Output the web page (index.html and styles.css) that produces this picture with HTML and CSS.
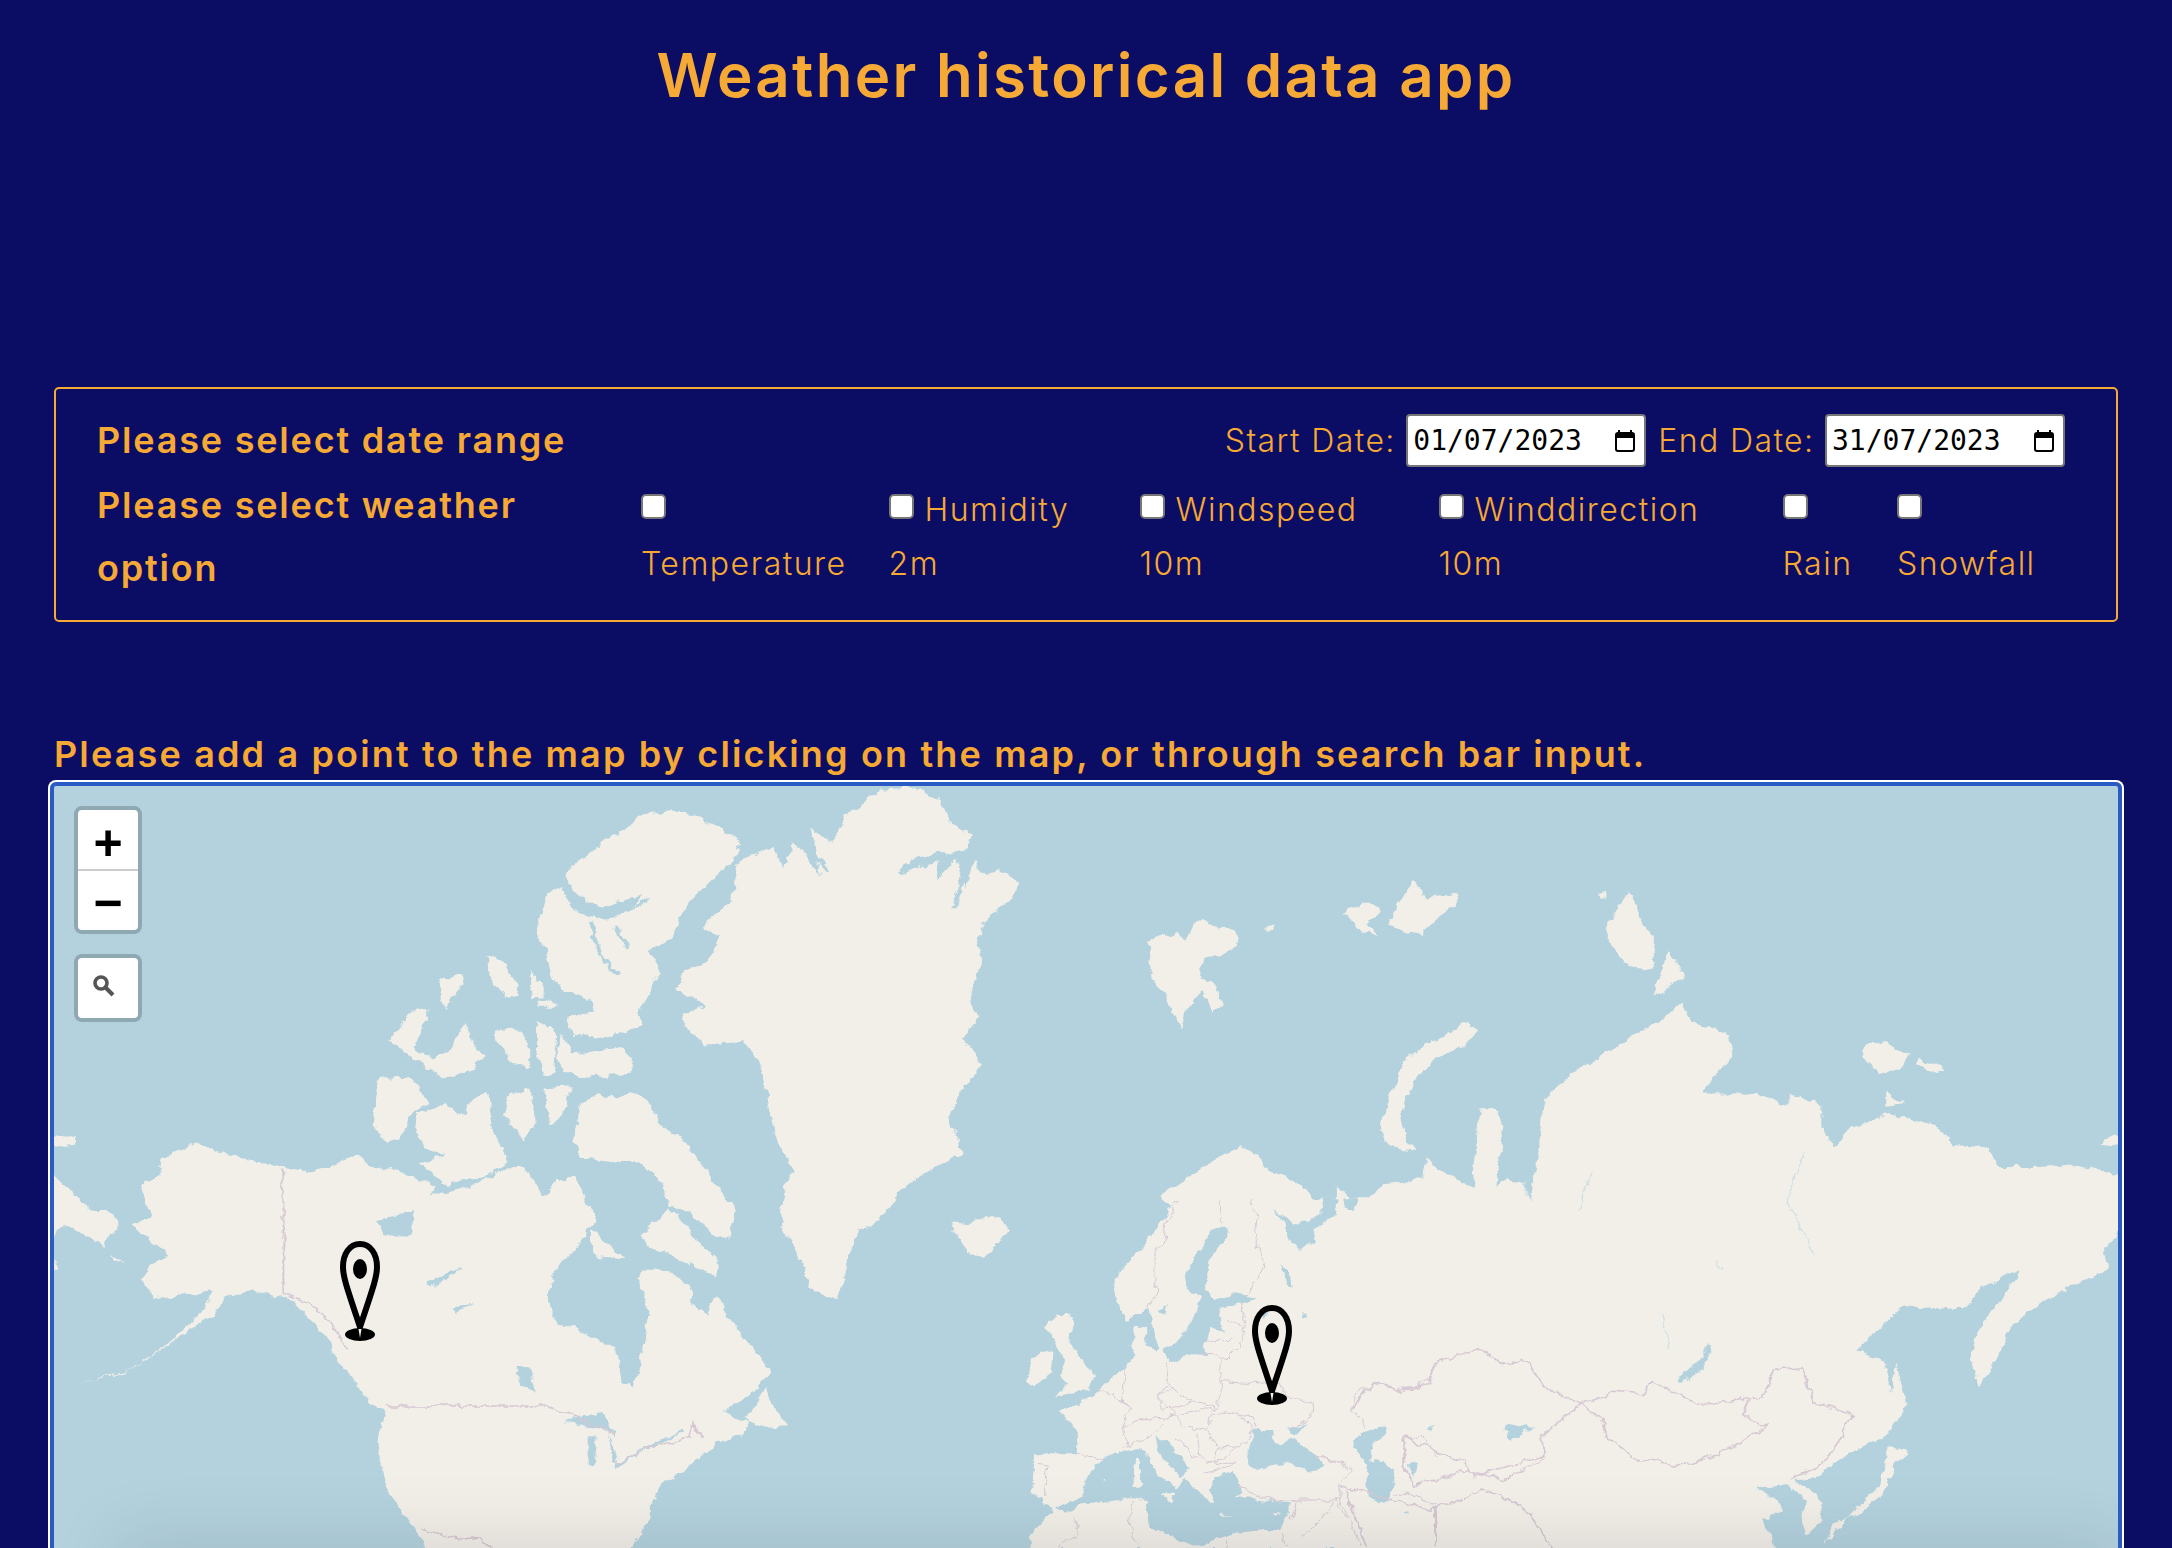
FILE: index.html
```html
<!DOCTYPE html>
<html lang="en">
<head>
<meta charset="utf-8">
<title>Weather historical data app</title>
<link rel="stylesheet" href="styles.css">
</head>
<body>
<main class="page">
  <h1 class="title">Weather historical data app</h1>

  <section class="panel">
    <div class="date-row">
      <h3 class="panel-label">Please select date range</h3>
      <div class="dates">
        <span class="field-label">Start Date:</span>
        <div class="date-input"><span>01/07/2023</span><svg class="cal" viewBox="0 0 20 22"><path d="M4 0v3M16 0v3" stroke="#000" stroke-width="2"/><rect x="1" y="3" width="18" height="18" rx="2" fill="none" stroke="#000" stroke-width="2"/><rect x="1" y="3" width="18" height="5" fill="#000"/></svg></div>
        <span class="field-label">End Date:</span>
        <div class="date-input"><span>31/07/2023</span><svg class="cal" viewBox="0 0 20 22"><path d="M4 0v3M16 0v3" stroke="#000" stroke-width="2"/><rect x="1" y="3" width="18" height="18" rx="2" fill="none" stroke="#000" stroke-width="2"/><rect x="1" y="3" width="18" height="5" fill="#000"/></svg></div>
      </div>
    </div>
    <div class="option-row">
      <h3 class="panel-label option-title">Please select weather option</h3>
      <div class="options">
        <label class="opt"><input type="checkbox"><br>Temperature</label>
        <label class="opt"><input type="checkbox">Humidity<br>2m</label>
        <label class="opt"><input type="checkbox">Windspeed<br>10m</label>
        <label class="opt"><input type="checkbox">Winddirection<br>10m</label>
        <label class="opt"><input type="checkbox"><br>Rain</label>
        <label class="opt"><input type="checkbox"><br>Snowfall</label>
      </div>
    </div>
  </section>

  <h3 class="map-heading">Please add a point to the map by clicking on the map, or through search bar input.</h3>

  <section class="map">
    <svg class="world" viewBox="54 786 2064 762" preserveAspectRatio="none">
      <defs>
        <filter id="rough" filterUnits="userSpaceOnUse" x="40" y="770" width="2100" height="800">
          <feTurbulence type="fractalNoise" baseFrequency="0.09" numOctaves="4" seed="4" result="n"/>
          <feDisplacementMap in="SourceGraphic" in2="n" scale="9" xChannelSelector="R" yChannelSelector="G"/>
          <feGaussianBlur stdDeviation="0.7"/>
        </filter>
      </defs>
      <g filter="url(#rough)">
        <!-- Americas, Greenland, Arctic Canada -->
        <g class="land" transform="translate(40 780) scale(.6761 .4898)">
          <path d="M1205 60L1240 20 1300 15 1335 50 1345 85 1380 115 1365 145 1290 160 1275 190 1330 165 1325 205 1355 160 1370 220 1380 165 1395 195 1415 180 1450 210 1440 240 1395 290 1385 340 1395 370 1375 430 1385 490 1365 530 1395 580 1360 640 1345 690 1365 760 1310 800 1270 845 1240 900 1205 930 1190 1010 1180 1060 1140 1040 1120 970 1095 900 1100 830 1115 800 1085 720 1075 640 1060 570 1040 535 985 540 960 510 950 480 985 460 940 430 950 395 990 370 1005 320 980 300 1020 245 1030 220 1030 170 1085 135 1100 185 1115 125 1155 195 1140 100 1175 130 1190 70Z"/>
          <path d="M895 70L930 62 975 75 1010 100 1035 130 1025 165 1000 195 960 250 935 320 900 350 915 385 905 425 885 480 890 500 840 525 790 520 780 490 820 470 810 445 770 430 755 390 745 340 735 310 750 235 770 215 790 265 830 285 850 280 880 255 890 235 830 260 790 230 775 190 830 130 860 105Z"/>
          <path d="M770 515L790 560 860 545 880 575 870 600 810 608 775 600 765 560Z"/>
          <path d="M660 360L690 375 710 440 690 445 665 400ZM725 390L745 420 745 445 725 445ZM595 405L625 395 628 420 610 440 600 470 590 440ZM740 450L765 455 760 465 738 465ZM735 490L765 520 760 600 745 600 735 560Z"/>
          <path d="M515 530L550 470 575 465 565 510 555 550 585 570 610 540 630 500 645 550 660 560 640 590 600 610 585 600 555 570 530 545ZM670 510L710 510 725 540 725 585 700 580 690 550 670 530Z"/>
          <path d="M500 610L545 605 575 655 545 690 535 730 515 740 490 705Z"/>
          <path d="M560 680L600 660 625 690 640 650 665 640 670 720 695 780 660 810 600 825 560 780 600 765 570 750 555 720Z"/>
          <path d="M695 640L725 630 735 700 715 735 685 680ZM745 630L785 625 770 690 755 705Z"/>
          <path d="M790 730L800 660 830 640 850 650 865 640 900 650 915 700 950 730 980 790 1030 880 1020 930 1000 935 960 880 930 870 920 820 885 780 860 780 800 770Z"/>
          <path d="M890 930L930 875 960 920 1005 985 1000 1015 960 990 900 950Z"/>
          <path d="M815 915L850 960 870 980 830 975 815 960Z"/>
          <path d="M148 825L175 810 180 775 230 738 260 760 300 770 360 790 405 800 440 785 470 765 495 795 520 790 585 830 575 850 640 830 650 820 700 790 715 790 745 850 760 820 790 810 810 860 820 900 790 960 760 1000 750 1060 765 1110 800 1125 850 1160 860 1225 875 1240 885 1215 895 1140 900 1080 885 1020 890 1000 925 1000 960 1030 975 1080 985 1095 1000 1050 1030 1120 1060 1170 1080 1210 1060 1245 1010 1290 1050 1310 1045 1330 1000 1355 960 1400 920 1440 905 1480 905 1510 870 1575 575 1575 540 1500 510 1440 500 1350 510 1290 480 1260 465 1225 440 1190 430 1150 400 1100 370 1060 310 1040 280 1050 255 1090 215 1130 160 1180 125 1210 60 1230 130 1205 190 1150 240 1085 260 1040 170 1060 150 1020 165 990 190 970 135 910 165 890Z"/>
          <path d="M1045 1300L1075 1240 1085 1280 1105 1320 1060 1320Z"/>
          <path d="M1345 900L1375 905 1385 895 1420 895 1432 925 1395 975 1370 965 1355 930Z"/>
          <path d="M15 800L50 840 75 880 100 880 115 905 95 950 65 930 35 905 15 940ZM15 730L50 730 50 745 15 750ZM15 970L30 1000 15 1000ZM105 970L125 985 110 982Z"/>
        </g>
        <g class="water" transform="translate(40 780) scale(.6761 .4898)">
          <path d="M495 900L555 880 550 930 510 930ZM570 1030L625 990 600 1020 575 1040ZM610 1075L640 1070 615 1090ZM700 1195L725 1200 735 1255 715 1240ZM775 1310L830 1290 850 1335 800 1315ZM810 1340L825 1340 820 1400 810 1395ZM840 1335L855 1380 850 1400ZM960 980L1000 1030 985 1090 965 1070Z"/>
        </g>
        <g class="waterline" transform="translate(40 780) scale(.6761 .4898)">
          <path d="M800 250Q820 290 860 270T895 240M815 290L830 360 855 400M850 300L870 340M1130 110L1165 190M1270 190Q1310 140 1350 155M1350 260L1375 170M850 1405L890 1370 950 1330"/>
        </g>
        <g class="border" transform="translate(40 780) scale(.6761 .4898)">
          <path d="M360 795V1050L400 1070 425 1100 455 1165M512 1278H750L780 1295 850 1335M850 1400L905 1360 960 1345 965 1310 980 1345M565 1530L625 1550 650 1545 665 1568"/>
        </g>

        <!-- Eurasia outline -->
        <g class="land" transform="translate(1100 780) scale(.6837 .4898)">
          <path d="M70 330L115 310 125 330 140 285 200 305 205 330 175 362 150 360 145 400 165 410 180 460 165 475 150 430 130 460 120 510 95 440 75 400Z"/>
          <path d="M240 300L255 295 255 305 243 310ZM355 270L395 250 410 265 390 295 405 320 375 300ZM430 265L460 200 475 240 520 230 525 255 500 275 490 290 470 315 420 300ZM740 300L775 225 795 300 810 320 810 385 790 390 765 370 745 330ZM830 350L855 395 850 410 810 440ZM730 232L742 228 742 240 732 240Z"/>
          <path d="M540 490L552 510 540 535 490 570 460 620 440 680 445 720 460 760 425 750 408 715 430 620 450 565 490 530 520 510Z"/>
          <path d="M1465 745L1480 725 1495 730 1495 750ZM1120 540L1150 535 1185 560 1175 585 1140 600 1115 570ZM1195 565L1235 590 1225 598 1195 580ZM1150 640L1175 660 1150 665Z"/>
          <path d="M90 845L150 790 205 745 235 770 240 790 300 830 322 875 300 900 265 895 345 880 345 825 365 850 365 880 420 825 470 815 478 770 490 790 545 830 555 670 580 670 590 705 580 830 600 815 625 830 630 860 650 650 700 590 760 540 820 490 850 455 865 495 920 520 925 560 880 640 960 640 1005 665 1010 640 1055 665 1055 710 1075 750 1090 720 1150 680 1225 705 1245 745 1300 750 1315 790 1375 790 1420 785 1500 810 1500 900 1470 960 1475 1000 1400 1045 1360 1085 1330 1120 1310 1190 1285 1240 1275 1170 1285 1120 1320 1060 1345 1000 1290 1035 1265 1080 1245 1080 1175 1075 1130 1130 1105 1165 1150 1190 1155 1250 1175 1280 1150 1340 1100 1370 1070 1400 1045 1425 1015 1430 1050 1460 1058 1510 1035 1540 1025 1500 1035 1470 1005 1440 960 1445 990 1470 1000 1490 970 1510 990 1575 350 1575 350 1000 90 860Z"/>
          <path d="M1165 1190L1180 1280 1160 1320 1155 1260ZM1150 1360L1185 1370 1160 1400 1150 1450 1120 1490 1070 1520 1060 1560 1105 1490 1140 1440 1150 1400Z"/>
        </g>

        <!-- Europe, detail scale -->
        <g class="land" transform="translate(1020 1200) scale(.3333)">
          <path d="M470 -5L440 40 410 85 370 140 330 180 295 215 282 250 295 320 320 362 385 325 395 375 420 440 405 455 380 440 378 380 345 385 335 440 350 460 320 500 280 530 240 570 195 600 115 630 175 700 170 760 45 760 35 880 95 920 100 935 40 990 30 1050 1265 1050 1265 -5Z"/>
          <path d="M75 380L110 345 140 345 165 375 145 420 185 480 225 525 210 565 105 590 150 550 120 530 130 475 105 430 95 400ZM30 480L65 450 100 460 95 520 50 555 22 545Z"/>
        </g>
        <g class="water" transform="translate(1020 1200) scale(.3333)">
          <path d="M600 78L630 90 610 125 570 175 560 225 555 265 580 300 650 280 710 295 670 310 600 320 590 350 615 395 570 385 555 440 560 465 500 462 450 490 430 450 470 425 510 380 530 330 545 290 500 265 495 225 525 170 565 115 570 90Z"/>
          <path d="M760 30L830 70 900 50 910 -5 950 -5 945 40 880 90 880 125 845 150 800 110 790 70ZM785 195L810 220 815 260 795 250ZM970 -5L1015 -5 1000 30 975 25ZM850 335L860 355 845 355ZM420 330L440 320 430 345ZM720 340L745 335 735 355Z"/>
          <path d="M700 690L760 690 775 720 820 715 860 745 895 770 910 800 870 815 800 790 730 805 680 800 675 770Z"/>
          <path d="M800 690L860 670 830 705Z"/>
          <path d="M1010 710L1060 680 1105 680 1090 710 1060 730 1050 780 1090 790 1125 815 1110 880 1110 905 1075 910 1040 880 1045 810 1030 770 1000 740Z"/>
          <path d="M105 925L190 890 200 830 255 770 330 745 365 745 410 820 470 870 490 830 510 850 540 880 560 905 590 905 570 870 585 830 640 815 665 880 650 890 720 900 810 910 800 950 780 985 640 1000 530 1040 460 1010 390 985 380 900 340 895 190 915 130 940Z"/>
          <path d="M410 710L440 720 510 810 480 830 420 760Z"/>
          <path d="M1150 940L1165 935 1165 945ZM1220 690L1240 680 1235 695Z"/>
        </g>
        <g class="land" transform="translate(1020 1200) scale(.3333)">
          <path d="M760 710L800 700 805 720 775 735ZM345 775L360 775 360 860 340 860ZM420 880L470 880 455 905ZM605 938L640 945 605 945ZM755 940L785 940 760 950ZM245 840L255 845 245 850Z"/>
        </g>
        <g class="border" transform="translate(1020 1200) scale(.3333)">
          <path d="M475 0L440 60 430 130 405 150 405 240 410 280 385 325M600 0L603 70M695 0L710 60 705 120 720 160 735 200 700 255 675 290M670 310L665 350 680 380 655 440 615 480 600 480M600 480V540L610 580 575 635M605 545L680 550 725 550 780 545 800 590 880 605 875 650 810 690M560 420L640 415M620 360L670 380M540 462L590 460 600 480M440 490L445 555 410 590 430 625 515 605 580 620M320 500L305 600 335 625 305 680 370 660 430 655 470 645 410 590M410 590L450 565 515 605M480 640L580 625M430 655L480 650 480 680 560 690 580 640M560 690L590 745 660 740 700 690 660 640 580 640M660 640L695 645 710 690M240 570L300 600 335 625M170 760L250 780M50 790L85 795 70 890M305 680L320 740 375 710 430 680M470 710L520 770 550 780 590 790 650 790M530 700L540 770M590 745V790L650 740M545 820L590 810 650 790M650 850L720 890 780 905 830 900 960 900M880 760L950 790 1000 810 960 850 960 900 990 960 1020 1040M880 760L990 800M1120 880L1170 880 1250 920M1155 800L1155 720 1200 710 1255 770M1260 480L1225 540 1150 575 1065 550 1010 580 995 630 1035 680M950 900L980 960M810 960L830 900M165 945L175 1000 110 1044M340 900L325 970 360 1044M620 1044V1010M790 1000L800 1044M840 1010L900 960 950 900"/>
        </g>
        <g class="border" transform="translate(1100 780) scale(.6837 .4898)">
          <path d="M367 1285L400 1230 440 1245 480 1235 490 1190 555 1160 590 1195 620 1180 650 1240 705 1275 750 1250 795 1255 810 1230 880 1275 940 1265 970 1260 985 1205 1025 1200 1045 1270 1100 1295 1080 1350 1060 1390 1010 1430M705 1275L735 1310 740 1340 780 1385 850 1400 905 1375 975 1320 940 1300 950 1265M445 1340L490 1370 530 1390 550 1420 650 1380 645 1340 705 1275M445 1340L445 1400 460 1440 540 1410 590 1430 650 1385M350 1440L430 1470 490 1490 560 1450 600 1470 630 1500 660 1568M490 1490V1568M360 1450L390 1568"/>
        </g>
        <g class="water" transform="translate(1100 780) scale(.6837 .4898)">
          <path d="M890 1150L892 1180 850 1235 845 1225 880 1180ZM590 1320L640 1320 600 1345ZM450 1395L465 1395 460 1425Z"/>
        </g>
        <g class="waterline thin" transform="translate(1100 780) scale(.6837 .4898)">
          <path d="M1030 760L1005 860 1045 970M700 880L720 800M620 820L630 860M900 980L910 1000M820 1090L835 1160"/>
        </g>
      </g>
    </svg>

    <svg class="pin pin-canada" viewBox="0 0 40 100"><path d="M20 3C9.500 3 3 13 3 26 3 36 7 47 20 86 33 47 37 36 37 26 37 13 30.500 3 20 3Z" fill="none" stroke="#000" stroke-width="6" stroke-linejoin="round"/><ellipse cx="20" cy="28" rx="7" ry="10"/><ellipse cx="20" cy="93.500" rx="15" ry="6.500"/><path d="M18.500 88h3L20 97Z" fill="#f2efe9"/></svg>
    <svg class="pin pin-ukraine" viewBox="0 0 40 100"><path d="M20 3C9.500 3 3 13 3 26 3 36 7 47 20 86 33 47 37 36 37 26 37 13 30.500 3 20 3Z" fill="none" stroke="#000" stroke-width="6" stroke-linejoin="round"/><ellipse cx="20" cy="28" rx="7" ry="10"/><ellipse cx="20" cy="93.500" rx="15" ry="6.500"/><path d="M18.500 88h3L20 97Z" fill="#f2efe9"/></svg>

    <div class="control zoom">
      <button class="zoom-btn zoom-in" type="button">+</button>
      <button class="zoom-btn zoom-out" type="button">−</button>
    </div>
    <div class="control search">
      <svg class="search-icon" viewBox="0 0 24 24"><circle cx="9" cy="9" r="6" fill="none" stroke="#555" stroke-width="3.600"/><path d="M13 13l8 8" stroke="#555" stroke-width="4"/></svg>
    </div>
  </section>
</main>
</body>
</html>
```

FILE: styles.css
```css
* { box-sizing: border-box; }

html, body {
  margin: 0;
  height: 1548px;
  overflow: hidden;
  background: #0b0c63;
}

.page {
  padding: 0 54px;
  height: 1548px;
  overflow: hidden;
  color: #f6a935;
  font-family: Inter, "Liberation Sans", sans-serif;
}

.title {
  margin: 0;
  padding-top: 38px;
  height: 387px;
  font-size: 60px;
  line-height: 74px;
  font-weight: 600;
  letter-spacing: 2.300px;
  text-align: center;
}

.panel {
  height: 235px;
  border: 2px solid #f6a935;
  border-radius: 5px;
  padding: 25px 51px 0 41px;
}

.date-row {
  display: flex;
  justify-content: space-between;
  align-items: center;
  height: 53px;
}

.panel-label {
  margin: 0;
  font-size: 36px;
  line-height: 63px;
  font-weight: 600;
  letter-spacing: 1.800px;
}

.dates {
  display: flex;
  align-items: center;
  gap: 12px;
}

.field-label {
  margin-right: -1.500px;
  font-size: 32px;
  font-weight: 300;
  letter-spacing: 1.400px;
}

.date-input {
  display: flex;
  align-items: center;
  justify-content: space-between;
  width: 240px;
  height: 53px;
  padding: 0 9px 0 5px;
  background: #fff;
  border: 2px solid #767676;
  border-radius: 4px;
  color: #000;
  font-family: "DejaVu Sans Mono", monospace;
  font-size: 28px;
}

.cal {
  width: 20px;
  height: 22px;
}

.option-row {
  display: flex;
  margin-top: 7px;
}

.option-title {
  flex: 0 0 544px;
  padding-right: 40px;
}

.options {
  flex: 1;
  display: grid;
  grid-template-columns: 247.500px 251px 299px 344px 114.500px auto;
  padding-top: 9px;
}

.opt {
  font-size: 32px;
  font-weight: 300;
  line-height: 54px;
  letter-spacing: 1.500px;
}

.opt input {
  appearance: none;
  width: 25px;
  height: 25px;
  margin: 0 11px 0 0;
  vertical-align: 2px;
  background: #fff;
  border: 2px solid #767676;
  border-radius: 5px;
}

.map-heading {
  margin: 0;
  padding-top: 107px;
  height: 158px;
  font-size: 36px;
  line-height: 50px;
  font-weight: 600;
  letter-spacing: 2.150px;
  white-space: nowrap;
}

.map {
  position: relative;
  margin: 2px 0 0 -4px;
  width: 2072px;
  height: 840px;
  border: 4px solid #2a5bc4;
  border-radius: 6px;
  background: #b3d2de;
  box-shadow: 0 0 0 2px #fff;
  overflow: hidden;
}

.map::after {
  content: "";
  position: absolute;
  left: 70px;
  right: 0;
  top: 762px;
  height: 60px;
  box-shadow: 0 0 70px 10px rgba(0, 0, 0, 0.1);
  background: rgba(0, 0, 0, 0.1);
}

.world {
  position: absolute;
  left: 0;
  top: 0;
  width: 2064px;
  height: 762px;
  display: block;
}

.land { fill: #f2efe9; }
.water { fill: #b3d2de; }
.border { fill: none; stroke: #d6c8d3; stroke-width: 3; }
.waterline { fill: none; stroke: #b3d2de; stroke-width: 5; }
.waterline.thin { stroke: #cfe0e4; stroke-width: 2; }

.pin {
  position: absolute;
  width: 40px;
  height: 100px;
}

.pin-canada { left: 286px; top: 455px; }
.pin-ukraine { left: 1198px; top: 519px; }

.control {
  position: absolute;
  left: 20px;
  width: 68px;
  background: #fff;
  border: 4px solid #8fa8b2;
  border-radius: 8px;
}

.zoom { top: 20px; height: 128px; }
.search { top: 168px; height: 68px; }

.zoom-btn {
  display: block;
  width: 100%;
  height: 60px;
  padding: 0;
  border: 0;
  background: none;
  color: #000;
  font-family: "Liberation Sans", sans-serif;
  font-size: 50px;
  font-weight: 700;
  line-height: 56px;
}

.zoom-in {
  height: 61px;
  padding-top: 5px;
  border-bottom: 2px solid #ccc;
}

.zoom-out {
  padding-top: 3px;
}

.search-icon {
  position: absolute;
  left: 14px;
  top: 16px;
  width: 24px;
  height: 24px;
}
```
